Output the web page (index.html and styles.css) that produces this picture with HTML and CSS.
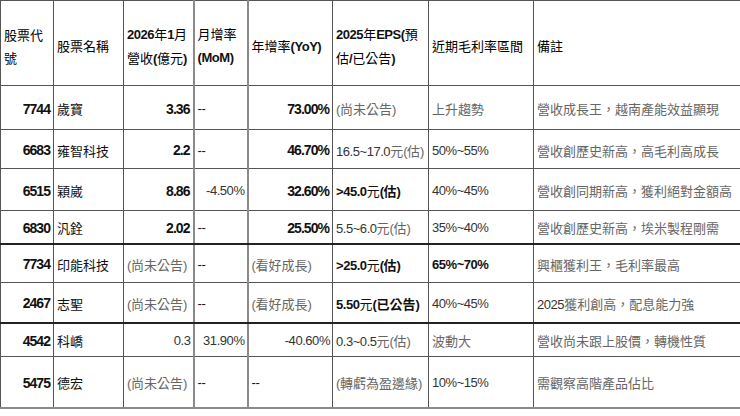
FILE: index.html
```html
<!DOCTYPE html>
<html lang="zh-Hant">
<head>
<meta charset="utf-8">
<title>股票表</title>
<link rel="stylesheet" href="styles.css">
</head>
<body>
<table class="sheet">
  <colgroup>
    <col class="w1"><col class="w2"><col class="w3"><col class="w4"><col class="w5"><col class="w6"><col class="w7"><col class="w8">
  </colgroup>
  <thead>
    <tr class="h0">
      <th class="c">股票代<br>號</th>
      <th class="c">股票名稱</th>
      <th><span class="b">2026</span><span class="c">年</span><span class="b">1</span><span class="c">月</span><br><span class="c">營收</span><span class="b">(</span><span class="c">億元</span><span class="b">)</span></th>
      <th class="thick"><span class="c">月增率</span><br><span class="b">(MoM)</span></th>
      <th class="thick"><span class="c">年增率</span><span class="b">(YoY)</span></th>
      <th><span class="b">2025</span><span class="c">年</span><span class="b">EPS(</span><span class="c">預</span><br><span class="c">估</span><span class="b">/</span><span class="c">已公告</span><span class="b">)</span></th>
      <th class="c">近期毛利率區間</th>
      <th class="c">備註</th>
    </tr>
  </thead>
  <tbody>
    <tr class="h1">
      <td class="r b">7744</td>
      <td class="c">歲寶</td>
      <td class="r b">3.36</td>
      <td class="thick">--</td>
      <td class="thick r b">73.00%</td>
      <td class="g">(<span class="c">尚未公告</span>)</td>
      <td class="c g">上升趨勢</td>
      <td class="c g">營收成長王，越南產能效益顯現</td>
    </tr>
    <tr class="h2">
      <td class="r b">6683</td>
      <td class="c">雍智科技</td>
      <td class="r b">2.2</td>
      <td class="thick">--</td>
      <td class="thick r b">46.70%</td>
      <td class="d">16.5~17.0<span class="c g">元</span><span class="g">(<span class="c">估</span>)</span></td>
      <td class="d">50%~55%</td>
      <td class="c g">營收創歷史新高，高毛利高成長</td>
    </tr>
    <tr class="h3">
      <td class="r b">6515</td>
      <td class="c">穎崴</td>
      <td class="r b">8.86</td>
      <td class="thick r d">-4.50%</td>
      <td class="thick r b">32.60%</td>
      <td><span class="b">&gt;45.0</span><span class="c">元</span><span class="b">(</span><span class="c b">估</span><span class="b">)</span></td>
      <td class="d">40%~45%</td>
      <td class="c g">營收創同期新高，獲利絕對金額高</td>
    </tr>
    <tr class="h4 strong">
      <td class="r b">6830</td>
      <td class="c">汎銓</td>
      <td class="r b">2.02</td>
      <td class="thick">--</td>
      <td class="thick r b">25.50%</td>
      <td class="d">5.5~6.0<span class="c g">元</span><span class="g">(<span class="c">估</span>)</span></td>
      <td class="d">35%~40%</td>
      <td class="c g">營收創歷史新高，埃米製程剛需</td>
    </tr>
    <tr class="h5">
      <td class="r b">7734</td>
      <td class="c">印能科技</td>
      <td class="g">(<span class="c">尚未公告</span>)</td>
      <td class="thick">--</td>
      <td class="thick g">(<span class="c">看好成長</span>)</td>
      <td><span class="b">&gt;25.0</span><span class="c">元</span><span class="b">(</span><span class="c b">估</span><span class="b">)</span></td>
      <td class="b">65%~70%</td>
      <td class="c g">興櫃獲利王，毛利率最高</td>
    </tr>
    <tr class="h6 strong">
      <td class="r b">2467</td>
      <td class="c">志聖</td>
      <td class="g">(<span class="c">尚未公告</span>)</td>
      <td class="thick">--</td>
      <td class="thick g">(<span class="c">看好成長</span>)</td>
      <td><span class="b">5.50</span><span class="c">元</span><span class="b">(</span><span class="c b">已公告</span><span class="b">)</span></td>
      <td class="d">40%~45%</td>
      <td class="g"><span class="d">2025</span><span class="c">獲利創高，配息能力強</span></td>
    </tr>
    <tr class="h7">
      <td class="r b">4542</td>
      <td class="c">科嶠</td>
      <td class="r d">0.3</td>
      <td class="thick r d">31.90%</td>
      <td class="thick r d">-40.60%</td>
      <td class="d">0.3~0.5<span class="c g">元</span><span class="g">(<span class="c">估</span>)</span></td>
      <td class="c g">波動大</td>
      <td class="c g">營收尚未跟上股價，轉機性質</td>
    </tr>
    <tr class="h8">
      <td class="r b">5475</td>
      <td class="c">德宏</td>
      <td class="g">(<span class="c">尚未公告</span>)</td>
      <td class="thick">--</td>
      <td class="thick">--</td>
      <td class="g">(<span class="c">轉虧為盈邊緣</span>)</td>
      <td class="d">10%~15%</td>
      <td class="c g">需觀察高階產品佔比</td>
    </tr>
  </tbody>
</table>
</body>
</html>
```
FILE: styles.css
```css
html, body {
  margin: 0;
  padding: 0;
  background: #ffffff;
}

.sheet {
  border-collapse: collapse;
  table-layout: fixed;
  width: 740px;
  font-family: "Liberation Sans", "Noto Sans CJK TC", sans-serif;
  font-size: 13px;
  letter-spacing: -0.45px;
  color: #111111;
}

.w1 { width: 53px; }
.w2 { width: 70px; }
.w3 { width: 70px; }
.w4 { width: 54px; }
.w5 { width: 85px; }
.w6 { width: 96px; }
.w7 { width: 105px; }
.w8 { width: 207px; }

.sheet th,
.sheet td {
  border: 1px solid #555555;
  padding: 2px 2px 0 3px;
  white-space: nowrap;
  overflow: hidden;
  vertical-align: middle;
  text-align: left;
}

.sheet th {
  font-weight: normal;
  line-height: 23px;
  padding-top: 5px;
  color: #000000;
}

.sheet td:last-child,
.sheet th:last-child {
  border-right: 2px solid #8a8a8a;
}

.sheet tbody tr:last-child td {
  border-bottom: 2px solid #8a8a8a;
}

.sheet .thick {
  border-left: 2px solid #8a8a8a;
}

.sheet tr.strong td {
  border-bottom: 2px solid #222222;
}

.h0 { height: 85px; }
.h1 { height: 44px; }
.h2 { height: 39px; }
.h3 { height: 42px; }
.h4 { height: 33px; }
.h5 { height: 39px; }
.h6 { height: 40px; }
.h7 { height: 34px; }
.h8 { height: 51px; }

.sheet .c {
  font-family: "Noto Sans CJK TC", sans-serif;
  font-size: 13px;
  letter-spacing: 0;
}

.sheet .b { font-weight: bold; color: #111111; }
.sheet .g { color: #666666; }
.sheet .d { color: #333333; }
.sheet .r { text-align: right; }

.sheet td.r.b {
  font-size: 14px;
  letter-spacing: -0.95px;
  padding-right: 3px;
}
```
